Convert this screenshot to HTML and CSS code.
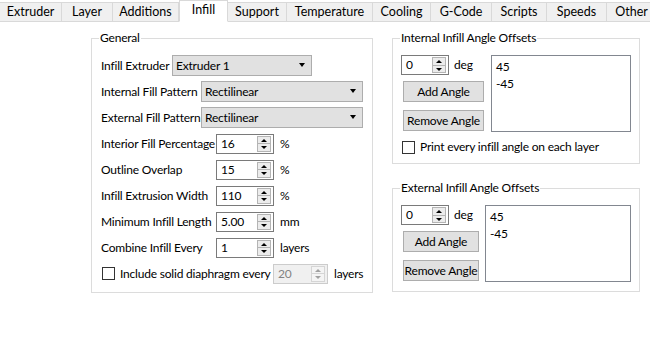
FILE: index.html
```html
<!DOCTYPE html>
<html>
<head>
<meta charset="utf-8">
<link rel="stylesheet" href="styles.css">
</head>
<body>
<div class="tabbar">
  <div class="tab t-extruder">Extruder</div>
  <div class="tab t-layer">Layer</div>
  <div class="tab t-additions">Additions</div>
  <div class="tab sel t-infill">Infill</div>
  <div class="tab t-support">Support</div>
  <div class="tab t-temp">Temperature</div>
  <div class="tab t-cooling">Cooling</div>
  <div class="tab t-gcode">G-Code</div>
  <div class="tab t-scripts">Scripts</div>
  <div class="tab t-speeds">Speeds</div>
  <div class="tab t-other">Other</div>
</div>
<div class="page">
  <fieldset class="group general">
    <legend>General</legend>
    <div class="row">
      <span class="lbl lw-a">Infill Extruder</span>
      <div class="combo cw-a">Extruder 1<span class="carrow"></span></div>
    </div>
    <div class="row">
      <span class="lbl lw-b">Internal Fill Pattern</span>
      <div class="combo cw-b">Rectilinear<span class="carrow"></span></div>
    </div>
    <div class="row">
      <span class="lbl lw-b">External Fill Pattern</span>
      <div class="combo cw-b">Rectilinear<span class="carrow"></span></div>
    </div>
    <div class="row">
      <span class="lbl lw-c">Interior Fill Percentage</span>
      <div class="spin sw-a">16<span class="sbtn"><i class="up"></i><i class="dn"></i></span></div>
      <span class="unit">%</span>
    </div>
    <div class="row">
      <span class="lbl lw-c">Outline Overlap</span>
      <div class="spin sw-a">15<span class="sbtn"><i class="up"></i><i class="dn"></i></span></div>
      <span class="unit">%</span>
    </div>
    <div class="row">
      <span class="lbl lw-c">Infill Extrusion Width</span>
      <div class="spin sw-a">110<span class="sbtn"><i class="up"></i><i class="dn"></i></span></div>
      <span class="unit">%</span>
    </div>
    <div class="row">
      <span class="lbl lw-c">Minimum Infill Length</span>
      <div class="spin sw-a">5.00<span class="sbtn"><i class="up"></i><i class="dn"></i></span></div>
      <span class="unit">mm</span>
    </div>
    <div class="row">
      <span class="lbl lw-c">Combine Infill Every</span>
      <div class="spin sw-a">1<span class="sbtn"><i class="up"></i><i class="dn"></i></span></div>
      <span class="unit">layers</span>
    </div>
    <div class="row last">
      <span class="check"></span>
      <span class="lbl lw-d">Include solid diaphragm every</span>
      <div class="spin disabled sw-b">20<span class="sbtn"><i class="up"></i><i class="dn"></i></span></div>
      <span class="unit">layers</span>
    </div>
  </fieldset>
  <div class="rightcol">
    <fieldset class="group angles internal">
      <legend>Internal Infill Angle Offsets</legend>
      <div class="angle-body">
        <div class="angle-ctrl">
          <div class="degrow">
            <div class="spin sw-c">0<span class="sbtn"><i class="up"></i><i class="dn"></i></span></div>
            <span class="unit">deg</span>
          </div>
          <div class="btn bw-a add">Add Angle</div>
          <div class="btn bw-a rem">Remove Angle</div>
        </div>
        <div class="list lst-a">
          <div class="item">45</div>
          <div class="item">-45</div>
        </div>
      </div>
      <div class="checkrow">
        <span class="check"></span>
        <span class="lbl">Print every infill angle on each layer</span>
      </div>
    </fieldset>
    <fieldset class="group angles external">
      <legend>External Infill Angle Offsets</legend>
      <div class="angle-body">
        <div class="angle-ctrl">
          <div class="degrow">
            <div class="spin sw-c">0<span class="sbtn"><i class="up"></i><i class="dn"></i></span></div>
            <span class="unit">deg</span>
          </div>
          <div class="btn bw-b add">Add Angle</div>
          <div class="btn bw-b rem">Remove Angle</div>
        </div>
        <div class="list lst-b">
          <div class="item">45</div>
          <div class="item">-45</div>
        </div>
      </div>
    </fieldset>
  </div>
</div>
</body>
</html>
```

FILE: styles.css
```css
html, body {
  margin: 0;
  padding: 0;
}
body {
  width: 650px;
  height: 347px;
  overflow: hidden;
  background: #ffffff;
  color: #000000;
  font-family: Lato, "Noto Sans", sans-serif;
  font-size: 12px;
  letter-spacing: -0.2px;
  line-height: 14px;
}

/* Tabs */
.tabbar {
  display: flex;
  align-items: flex-end;
  height: 22px;
  white-space: nowrap;
}
.tab {
  box-sizing: border-box;
  height: 20px;
  flex: none;
  display: flex;
  align-items: center;
  justify-content: center;
  background: #f0f0f0;
  border: 1px solid #d9d9d9;
  border-left: none;
  padding-bottom: 1px;
  font-size: 12.5px;
  letter-spacing: 0;
}
.tab.sel {
  height: 22px;
  background: #ffffff;
  border-left: 1px solid #d9d9d9;
  border-bottom-color: #ffffff;
  padding-bottom: 3px;
}
.t-extruder { width: 62px; }
.t-layer { width: 51px; }
.t-additions { width: 66px; }
.t-infill { width: 49px; }
.t-support { width: 59px; }
.t-temp { width: 86px; }
.t-cooling { width: 58px; }
.t-gcode { width: 61px; }
.t-scripts { width: 55px; }
.t-speeds { width: 60px; }
.t-other { width: 50px; }

/* Page */
.page {
  display: flex;
  align-items: flex-start;
  padding: 9px 0 0 91px;
  gap: 19px;
}
.group {
  margin: 0;
  box-sizing: border-box;
  border: 1px solid #dcdcdc;
  min-width: 0;
}
.group legend {
  padding: 0 1px;
  margin-left: -1px;
  line-height: 14px;
  height: 14px;
}
.general legend {
  margin-left: -2px;
}

.general {
  width: 282px;
  padding: 10px 8px 8px 9px;
}
.row {
  display: flex;
  align-items: center;
  height: 21px;
  margin-bottom: 5px;
}
.row.last {
  margin-bottom: 0;
}
.lbl {
  flex: none;
  white-space: nowrap;
}
.lw-a { width: 71px; }
.lw-b { width: 100px; }
.lw-c { width: 115px; }
.lw-d { width: 153px; }

.combo {
  position: relative;
  box-sizing: border-box;
  height: 21px;
  background: #e1e1e1;
  border: 1px solid #adadad;
  padding-left: 3px;
  display: flex;
  align-items: center;
}
.cw-a { width: 140px; }
.cw-b { width: 162px; }
.carrow {
  position: absolute;
  right: 6px;
  top: 7px;
  width: 0;
  height: 0;
  border-left: 3.5px solid transparent;
  border-right: 3.5px solid transparent;
  border-top: 4px solid #000000;
}

.spin {
  position: relative;
  box-sizing: border-box;
  height: 20px;
  background: #ffffff;
  border: 1px solid #7a7a7a;
  padding-left: 4px;
  display: flex;
  align-items: center;
  flex: none;
}
.sw-a { width: 58px; }
.sw-b { width: 55px; }
.sw-c { width: 48px; }
.sbtn {
  position: absolute;
  right: 2px;
  top: 1px;
  bottom: 1px;
  width: 14px;
  box-sizing: border-box;
  border: 1px solid #b4b4b4;
  background: #ececec;
  display: flex;
  flex-direction: column;
}
.sbtn i {
  flex: 1;
  position: relative;
  display: block;
}
.sbtn i.up {
  border-bottom: 1px solid #b4b4b4;
}
.sbtn i::after {
  content: "";
  position: absolute;
  left: 3px;
  width: 0;
  height: 0;
  border-left: 3px solid transparent;
  border-right: 3px solid transparent;
}
.sbtn i.up::after {
  top: 2px;
  border-bottom: 3px solid #000000;
}
.sbtn i.dn::after {
  top: 2px;
  border-top: 3px solid #000000;
}
.spin.disabled {
  background: #f0f0f0;
  border-color: #cccccc;
  color: #838383;
}
.spin.disabled .sbtn {
  border-color: #d5d5d5;
  background: #f4f4f4;
}
.spin.disabled .sbtn i.up {
  border-bottom-color: #d5d5d5;
}
.spin.disabled .sbtn i.up::after {
  border-bottom-color: #a0a0a0;
}
.spin.disabled .sbtn i.dn::after {
  border-top-color: #a0a0a0;
}
.unit {
  margin-left: 6px;
  white-space: nowrap;
}
.check {
  flex: none;
  box-sizing: border-box;
  width: 13px;
  height: 13px;
  border: 1px solid #333333;
  background: #ffffff;
  margin-left: 1px;
  margin-right: 5px;
}

/* Right column */
.rightcol {
  display: flex;
  flex-direction: column;
  width: 248px;
}
.angles {
  width: 248px;
  padding: 10px 8px 9px 8px;
}
.internal {
  padding-bottom: 9px;
}
.external {
  margin-top: 17px;
}
.angle-body {
  display: flex;
  justify-content: space-between;
  align-items: flex-start;
}
.angle-ctrl {
  display: flex;
  flex-direction: column;
  align-items: flex-start;
}
.degrow {
  display: flex;
  align-items: center;
}
.degrow .unit {
  margin-left: 5px;
}
.btn {
  box-sizing: border-box;
  height: 21px;
  margin-left: 2px;
  background: #e1e1e1;
  border: 1px solid #adadad;
  display: flex;
  align-items: center;
  justify-content: center;
  white-space: nowrap;
}
.btn.add {
  margin-top: 6px;
}
.btn.rem {
  margin-top: 8px;
}
.bw-a { width: 81px; }
.bw-b { width: 76px; }
.list {
  box-sizing: border-box;
  height: 77px;
  border: 1px solid #828790;
  background: #ffffff;
  padding: 2px 4px;
}
.lst-a { width: 140px; }
.lst-b { width: 146px; }
.item {
  height: 17px;
  line-height: 17px;
}
.checkrow {
  display: flex;
  align-items: center;
  margin-top: 8px;
  height: 14px;
}
```
